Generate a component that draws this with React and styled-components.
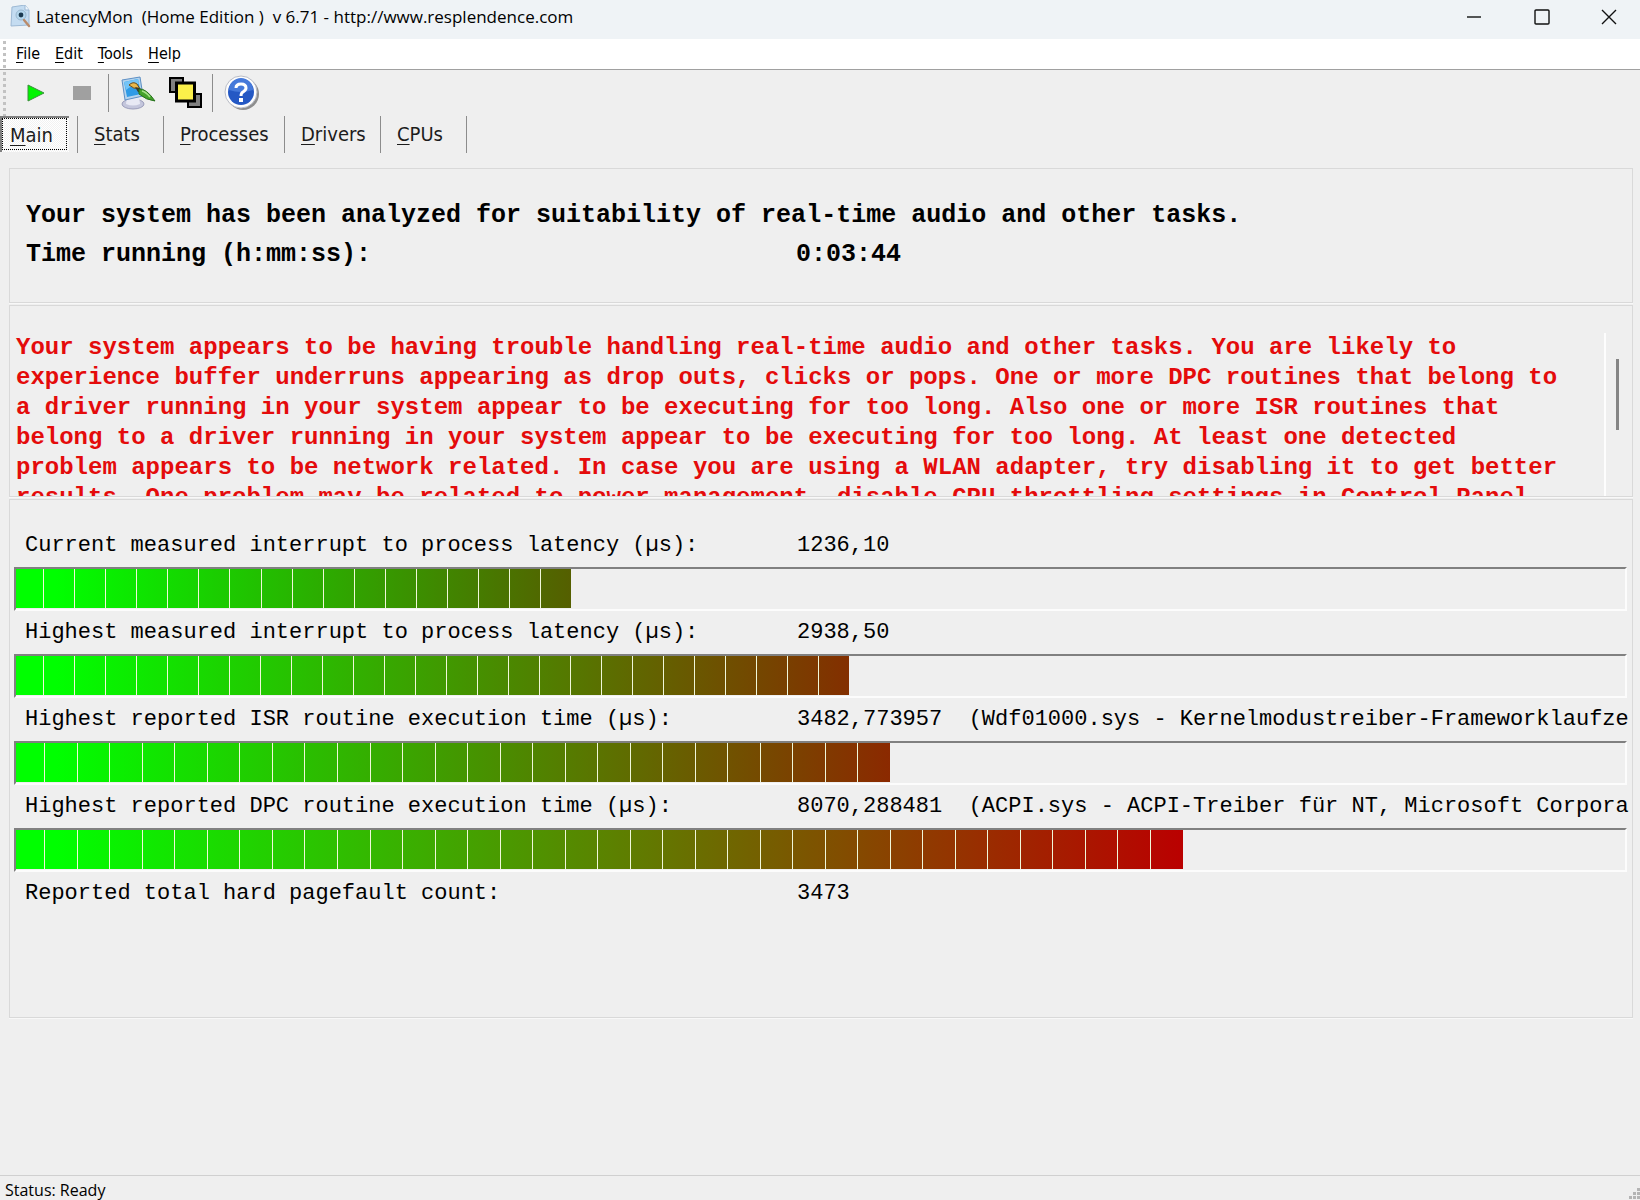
import React, { useState } from "react";
import styled, { createGlobalStyle, css } from "styled-components";

const GlobalStyle = createGlobalStyle`
  * {
    box-sizing: border-box;
  }

  body {
    margin: 0;
    background: #efefef;
    color: #000;
    font-family: "Open Sans", "Noto Sans", sans-serif;
  }

  button {
    margin: 0;
    padding: 0;
    border: 0;
    background: none;
    color: inherit;
    font: inherit;
  }
`;

const Window = styled.div`
  display: flex;
  flex-direction: column;
  min-height: 100vh;
`;

const TitleBar = styled.header`
  display: flex;
  align-items: center;
  height: 39px;
  padding: 0 0 6px 10px;
  background: #eff3f6;
`;

const Title = styled.h1`
  flex: 1;
  margin: 0 0 0 5px;
  font-size: 17px;
  font-weight: 400;
  line-height: 24px;
  white-space: pre;
`;

const WindowButton = styled.button`
  display: flex;
  align-items: center;
  justify-content: center;
  width: 68px;
  height: 32px;

  &:last-child {
    width: 62px;
    margin-left: 2px;
  }
`;

const gripper = css`
  &::before {
    content: "";
    flex: none;
    width: 3px;
    align-self: stretch;
    margin: 2px 0 0 3px;
    background: repeating-linear-gradient(#c2c2c2 0 3px, transparent 3px 6px);
  }
`;

const MenuBar = styled.nav`
  display: flex;
  align-items: center;
  height: 31px;
  border-bottom: 1px solid #a0a0a0;
  background: #fff;
  ${gripper}
`;

const MenuButton = styled.button`
  margin-left: 10px;
  padding-right: 5px;
  font-family: "DejaVu Sans Condensed", "DejaVu Sans", sans-serif;
  font-size: 16px;
  line-height: 26px;
`;

const Key = styled.span`
  text-decoration: underline;
  text-decoration-thickness: 1px;
  text-underline-offset: 3px;
`;

const Toolbar = styled.div`
  display: flex;
  align-items: center;
  height: 46px;
  ${gripper}
`;

const ToolGroup = styled.div`
  display: flex;
  align-items: center;
  gap: ${(p) => p.$gap || 0}px;
  height: 38px;
  padding: 0 5px 0 8px;
  border-left: ${(p) => (p.$first ? 0 : "1px solid #8c8c8c")};
  margin-left: ${(p) => (p.$first ? 1 : 0)}px;
`;

const ToolButton = styled.button`
  display: flex;
  align-items: center;
  justify-content: center;
  width: 42px;
  height: 38px;
`;

const TabList = styled.div`
  display: flex;
  height: 37px;
`;

const Tab = styled.button`
  width: ${(p) => p.$width}px;
  padding: 0 0 2px 16px;
  border-left: 1px solid #8c8c8c;
  font-family: "DejaVu Sans Condensed", "DejaVu Sans", sans-serif;
  font-size: 20px;
  line-height: 24px;
  text-align: left;
  color: #1c1c1c;
`;

// the pressed look: sunken edge, dithered face and a focus rectangle
const MainTab = styled(Tab)`
  height: 36px;
  margin-right: 8px;
  padding: 0 0 0 8px;
  border: 0;
  border-top: 2px solid #808080;
  border-left: 2px solid #808080;
  background: repeating-conic-gradient(#fff 0 25%, #f2f2f2 0 50%) 0 0 / 2px 2px;
  outline: 1px dotted #000;
  outline-offset: -3px;
`;

const Content = styled.main`
  flex: 1;
  display: flex;
  flex-direction: column;
  gap: 2px;
  padding: 15px 7px 157px 9px;
`;

const Panel = styled.section`
  border: 1px solid #d9d9d9;
  box-shadow: 0 1px 0 #f8f8f8;
  overflow: hidden;
`;

const mono = css`
  font-family: "Liberation Mono", monospace;
  white-space: pre;
`;

const Summary = styled(Panel)`
  padding: 27px 16px 28px;
`;

const SummaryLine = styled.p`
  ${mono}
  display: grid;
  grid-template-columns: ${(p) => (p.$split ? "770px 1fr" : "1fr")};
  margin: 0;
  font-size: 25px;
  font-weight: 700;
  line-height: 39px;
`;

const Report = styled(Panel)`
  display: flex;
  height: 192px;
  padding-top: 27px;
`;

const ReportText = styled.textarea`
  flex: 1;
  display: block;
  margin: 0;
  padding: 0 40px 0 6px;
  border: 0;
  border-right: 2px solid #fdfdfd;
  outline: 0;
  overflow: hidden;
  resize: none;
  background: transparent;
  color: #e40b0b;
  font-family: "Liberation Mono", monospace;
  font-size: 24px;
  font-weight: 700;
  line-height: 30px;
`;

const ScrollTrack = styled.div`
  width: 26px;
  padding: 26px 0 0 10px;
`;

const ScrollThumb = styled.div`
  width: 3px;
  height: 71px;
  background: #858585;
`;

const Measurements = styled(Panel)`
  flex: 1;
  padding: 24px 0 24px 4px;
`;

const Row = styled.div`
  ${mono}
  display: grid;
  grid-template-columns: 772px minmax(0, 1fr);
  padding-left: 11px;
  font-size: 22px;
  line-height: 43px;
`;

const Value = styled.span`
  overflow: hidden;
`;

const Bar = styled.div`
  height: 44px;
  margin-right: 5px;
  border: 2px solid;
  border-color: #808080 #fcfcfc #fcfcfc #808080;
`;

const BarFill = styled.div`
  display: flex;
  height: 39px;
`;

const Segment = styled.div`
  flex: 1;
  border-left: 1px solid #f0f7d8;

  &:first-child {
    flex: 0.9;
    border-left: 0;
  }
`;

const StatusBar = styled.footer`
  display: flex;
  justify-content: space-between;
  height: 25px;
  padding-left: 5px;
  border-top: 1px solid #d0d0d0;
  overflow: hidden;
  font-size: 16px;
  line-height: 28px;
`;

const AppIcon = () => (
  <svg width="21" height="23" viewBox="0 0 21 23" aria-hidden="true">
    <path d="M2 2 L15 0 L19 5 V20 L1 21 Z" fill="#c4dcf1" stroke="#9db9d4" />
    <path d="M15 0 V5 H19" fill="#eef6fd" stroke="#9db9d4" />
    <circle cx="11" cy="10" r="5" fill="#b4d6ec" stroke="#9bb8cf" />
    <circle cx="11" cy="10" r="2.4" fill="#1c3a50" />
    <path d="M14 15 L19 21" stroke="#b98b6b" strokeWidth="2.4" strokeLinecap="round" />
  </svg>
);

const PlayIcon = () => (
  <svg width="18" height="18" viewBox="0 0 18 18" aria-hidden="true">
    <path d="M1 1 V17 L17 9 Z" fill="#00f400" stroke="#3c8f3c" />
  </svg>
);

const StopIcon = () => (
  <svg width="18" height="14" viewBox="0 0 18 14" aria-hidden="true">
    <rect width="18" height="14" fill="#a0a0a0" />
  </svg>
);

const OptionsIcon = () => (
  <svg width="36" height="34" viewBox="0 0 36 34" aria-hidden="true">
    <ellipse cx="13" cy="28" rx="11" ry="5" fill="#c4c6dc" stroke="#9a9cba" />
    <path d="M7 20 H19 L20 28 Q13 31 6 28 Z" fill="#e8e9f4" />
    <path d="M2 4 L20 1 L23 20 L5 24 Z" fill="#b5d4ee" stroke="#5d8fc4" />
    <path d="M4 6 L18 3 L21 18 L7 21 Z" fill="#2f9be6" />
    <path d="M4 6 L18 3 L19 8 Q12 9 6 14 Z" fill="#74c4f6" />
    <path d="M9 9 Q13 5 17 8 L20 13 Q13 13 9 9 Z" fill="#e9b84c" stroke="#6e4f1a" />
    <path d="M15 11 L20 12 L23 17 L18 16 Z" fill="#3c3a2a" />
    <path d="M19 13 Q26 12 35 25 Q26 24 19 18 Z" fill="#45a32c" stroke="#24701a" />
    <path d="M22 15 Q26 16 30 21" fill="none" stroke="#a7e08a" strokeWidth="1.5" />
  </svg>
);

const WindowsIcon = () => (
  <svg width="34" height="32" viewBox="0 0 34 32" aria-hidden="true">
    <rect x="1" y="1" width="13" height="14" fill="#808080" stroke="#000" strokeWidth="2" />
    <rect x="19" y="17" width="13" height="13" fill="#808080" stroke="#000" strokeWidth="2" />
    <rect x="7.5" y="6" width="18" height="18" fill="#fbf04a" stroke="#000" strokeWidth="3" />
  </svg>
);

const HelpIcon = () => (
  <svg width="36" height="36" viewBox="0 0 36 36" aria-hidden="true">
    <circle cx="19" cy="19" r="16" fill="#8e8e8e" />
    <circle cx="17" cy="17" r="16" fill="#fdfdfd" stroke="#b9bcc6" />
    <circle cx="17" cy="17" r="13" fill="#2458c4" />
    <path d="M5 15 A12 12 0 0 1 29 15 Q17 19 5 15 Z" fill="#4579da" />
    <path
      d="M12 13 Q12 9 17 9 Q22 9 22 13 Q22 15 19 17 Q17 18 17 21"
      fill="none"
      stroke="#fff"
      strokeWidth="3"
    />
    <rect x="15" y="23" width="4" height="4" fill="#fff" />
  </svg>
);

const windowButtons = [
  { label: "Minimize", path: "M1 8 H15" },
  { label: "Maximize", path: "M2 1 H14 Q15 1 15 2 V14 Q15 15 14 15 H2 Q1 15 1 14 V2 Q1 1 2 1 Z" },
  { label: "Close", path: "M1 1 L15 15 M15 1 L1 15" },
];

const menus = ["File", "Edit", "Tools", "Help"];

const tabs = [
  { name: "Stats", width: 86 },
  { name: "Processes", width: 121 },
  { name: "Drivers", width: 96 },
  { name: "CPUs", width: 86 },
];

const report =
  "Your system appears to be having trouble handling real-time audio and other tasks. " +
  "You are likely to experience buffer underruns appearing as drop outs, clicks or pops. " +
  "One or more DPC routines that belong to a driver running in your system appear to be " +
  "executing for too long. Also one or more ISR routines that belong to a driver running " +
  "in your system appear to be executing for too long. At least one detected problem " +
  "appears to be network related. In case you are using a WLAN adapter, try disabling it " +
  "to get better results. One problem may be related to power management, disable CPU " +
  "throttling settings in Control Panel";

const measurements = [
  {
    label: "Current measured interrupt to process latency (µs):",
    value: "1236,10",
    percent: 34.5,
    segments: 18,
    color: "#555f00",
  },
  {
    label: "Highest measured interrupt to process latency (µs):",
    value: "2938,50",
    percent: 51.8,
    segments: 27,
    color: "#832f00",
  },
  {
    label: "Highest reported ISR routine execution time (µs):",
    value: "3482,773957  (Wdf01000.sys - Kernelmodustreiber-Frameworklaufze",
    percent: 54.3,
    segments: 27,
    color: "#8b2900",
  },
  {
    label: "Highest reported DPC routine execution time (µs):",
    value: "8070,288481  (ACPI.sys - ACPI-Treiber für NT, Microsoft Corpora",
    percent: 72.5,
    segments: 36,
    color: "#ba0000",
  },
];

const Mnemonic = ({ text }) => (
  <>
    <Key>{text[0]}</Key>
    {text.slice(1)}
  </>
);

const Measurement = ({ label, value, percent, segments, color }) => (
  <>
    <Row>
      <span>{label}</span>
      <Value>{value}</Value>
    </Row>
    <Bar role="meter" aria-label={label} aria-valuenow={percent} aria-valuemin={0} aria-valuemax={100}>
      <BarFill
        style={{
          width: `${percent}%`,
          background: `linear-gradient(90deg, #00ff00 40px, ${color})`,
        }}
      >
        {Array.from({ length: segments }, (_, i) => (
          <Segment key={i} />
        ))}
      </BarFill>
    </Bar>
  </>
);

const App = () => {
  const [active, setActive] = useState("Main");

  return (
    <Window>
      <GlobalStyle />
      <TitleBar>
        <AppIcon />
        <Title>{"LatencyMon  (Home Edition )  v 6.71 - http://www.resplendence.com"}</Title>
        {windowButtons.map(({ label, path }) => (
          <WindowButton key={label} aria-label={label}>
            <svg width="16" height="16" viewBox="0 0 16 16">
              <path d={path} fill="none" stroke="#111" strokeWidth="1.4" />
            </svg>
          </WindowButton>
        ))}
      </TitleBar>
      <MenuBar>
        {menus.map((name) => (
          <MenuButton key={name}>
            <Mnemonic text={name} />
          </MenuButton>
        ))}
      </MenuBar>
      <Toolbar>
        <ToolGroup $first $gap={4}>
          <ToolButton aria-label="Start"><PlayIcon /></ToolButton>
          <ToolButton aria-label="Stop"><StopIcon /></ToolButton>
        </ToolGroup>
        <ToolGroup $gap={6}>
          <ToolButton aria-label="Options"><OptionsIcon /></ToolButton>
          <ToolButton aria-label="Windows"><WindowsIcon /></ToolButton>
        </ToolGroup>
        <ToolGroup>
          <ToolButton aria-label="About"><HelpIcon /></ToolButton>
        </ToolGroup>
      </Toolbar>
      <TabList role="tablist">
        <MainTab
          role="tab"
          $width={69}
          aria-selected={active === "Main"}
          onClick={() => setActive("Main")}
        >
          <Mnemonic text="Main" />
        </MainTab>
        {tabs.map(({ name, width }) => (
          <Tab
            key={name}
            role="tab"
            $width={width}
            aria-selected={active === name}
            onClick={() => setActive(name)}
          >
            <Mnemonic text={name} />
          </Tab>
        ))}
        <Tab as="span" $width={1} />
      </TabList>
      <Content>
        <Summary>
          <SummaryLine>
            Your system has been analyzed for suitability of real-time audio and other tasks.
          </SummaryLine>
          <SummaryLine $split>
            <span>Time running (h:mm:ss):</span>
            <span>0:03:44</span>
          </SummaryLine>
        </Summary>
        <Report>
          <ReportText readOnly aria-label="Analysis result" value={report} />
          <ScrollTrack>
            <ScrollThumb />
          </ScrollTrack>
        </Report>
        <Measurements>
          {measurements.map((item) => (
            <Measurement key={item.label} {...item} />
          ))}
          <Row>
            <span>Reported total hard pagefault count:</span>
            <Value>3473</Value>
          </Row>
        </Measurements>
      </Content>
      <StatusBar>
        <span>Status: Ready</span>
        <svg width="12" height="23" viewBox="0 0 12 23" fill="#b4b4b4" aria-hidden="true">
          <path d="M9 12h3v3h-3z M5 16h3v3h-3z M9 16h3v3h-3z M1 20h3v3h-3z M5 20h3v3h-3z M9 20h3v3h-3z" />
        </svg>
      </StatusBar>
    </Window>
  );
};

export default App;
